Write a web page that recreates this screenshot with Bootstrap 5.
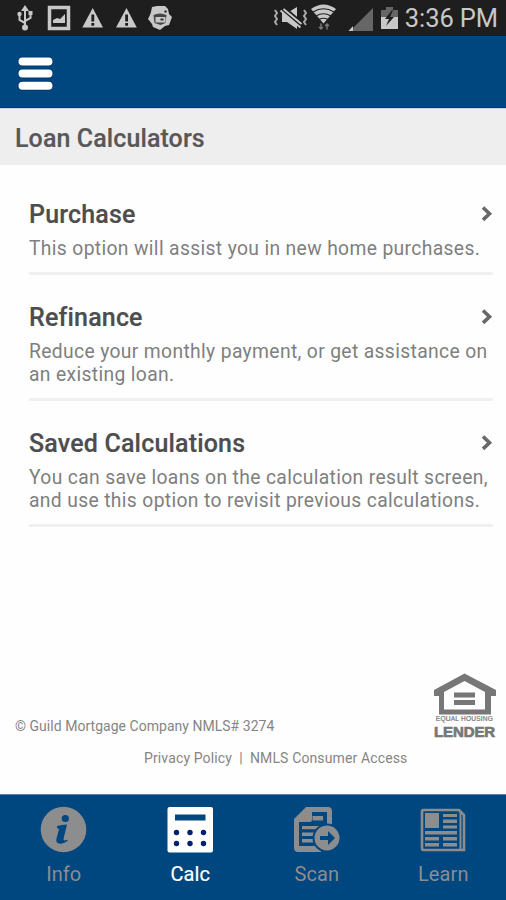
<!DOCTYPE html>
<html lang="en">
<head>
<meta charset="utf-8">
<meta name="viewport" content="width=device-width, initial-scale=1">
<title>Loan Calculators</title>
<link href="https://cdn.jsdelivr.net/npm/bootstrap@5.3.0/dist/css/bootstrap.min.css" rel="stylesheet">
<style>
body{font-family:Roboto,"Liberation Sans",sans-serif;height:900px;overflow:hidden;color:#7d7d7d;background:#fefefe}
svg{display:block;flex:none}
.statusbar{height:36px;background:#1e1e1e;color:#c8c8c8}
.clock{font-size:25.500px;line-height:36px;letter-spacing:-.1px;white-space:nowrap;width:95px;text-align:right}
.topnav{height:72px;background:#00467f;padding:4px 0 0 17px;border-bottom:1px solid #003a77}
.page-title{height:57px;background:#eee;border-top:1px solid #c9d3df;font-size:25px;line-height:59px;font-weight:500;color:#585858;padding-left:15px;letter-spacing:.1px;-webkit-text-stroke:.2px #585858}
.options{margin:6px 13px 0 29px}
.option{padding:28px 0 12px;border-bottom:3px solid #f0f0f0;color:#7f7f7f}
.option:first-child{padding-top:29px}
.option-title{font-size:25px;line-height:30px;font-weight:500;color:#4d4d4d;letter-spacing:.18px;-webkit-text-stroke:.2px #4d4d4d}
.option-text{font-size:19.300px;line-height:23px;margin-top:7px;letter-spacing:.35px;white-space:nowrap}
.legal{font-size:14px;line-height:20px;letter-spacing:.03px;white-space:nowrap;color:#858585}
.copyright{padding:0 9px 0 15px;height:70px}
.lender-logo{width:65px;height:70px}
.lender-small{font:6.600px/8px "Liberation Sans",Arial,sans-serif;letter-spacing:.2px;color:#777;-webkit-text-stroke:.2px #777}
.lender-big{font:bold 15px/14px "Liberation Sans",Arial,sans-serif;letter-spacing:-.1px;margin-top:2px;color:#777;-webkit-text-stroke:.7px #777}
.links{padding-left:144px;margin-top:8px;margin-bottom:26px;letter-spacing:.13px}
.tabs{height:106px;background:#00467f;border-top:1px solid #5f7fa8}
.tab{color:#8d8d8d;font-size:20px;line-height:24px;padding-top:11px;letter-spacing:.1px}
.tab.on{color:#fff}
.tab.on span{-webkit-text-stroke:.2px #fff}
.tab span{margin-top:8px;padding-left:1px}
</style>
<script src="https://cdn.jsdelivr.net/npm/bootstrap@5.3.0/dist/js/bootstrap.bundle.min.js"></script>
</head>
<body class="d-flex flex-column">
<header>
  <div class="statusbar d-flex justify-content-between">
    <svg width="180" height="36" viewBox="0 0 180 36" fill="#c8c8c8">
      <g stroke="#c8c8c8" stroke-width="2" fill="none"><path d="M25 9v19M25 23l-5.500-3v-5M25 21l5.500-3v-5"/></g>
      <path d="M25 5l4 6h-8z"/><circle cx="25" cy="27.500" r="3"/><circle cx="19.500" cy="14" r="2.200"/><path d="M28.500 11h4v4h-4z"/>
      <path d="M49.500 7.500h19v21h-19z" fill="none" stroke="#c8c8c8" stroke-width="3.500"/><path d="M53 23v-3l4-2 3 1 5-5v9z"/>
      <path fill-rule="evenodd" d="M92.700 8l10.300 19.500H82.300zM91.400 14.500v7h2.800v-7zm0 8.500v2.800h2.800V23zM126.500 8l10.300 19.500H116zM125.200 14.500v7h2.800v-7zm0 8.500v2.800h2.800V23z"/>
      <path d="M152 7l5-1 8 0 3 3 1 5 3 3-3 8-4 1-5 4-7-3-1-3-4-5 2-4 1-3z"/><path d="M153.500 15q6-3 13 0l-1 8-5 2-6-2z" fill="#444"/><path d="M155.500 17h10v5.500h-10z"/><path d="M160.500 18.500h3v2h-3z" fill="#333"/><circle cx="165.500" cy="11.500" r="1.200" fill="#333"/>
    </svg>
    <div class="d-flex">
      <svg width="133" height="36" viewBox="270 0 133 36" fill="#c8c8c8">
        <path d="M282 13h5l10-6v22l-10-7h-5z"/><path d="M281 7l21 18" stroke="#1e1e1e" stroke-width="6"/><path d="M280.500 10.500l20 17M283.500 9l18 15" stroke="#c8c8c8" stroke-width="1.900"/>
        <path d="M275 10l2 3-2 3 2 3-2 3 2 3M304 10l2 3-2 3 2 3-2 3 2 3" fill="none" stroke="#aaa" stroke-width="2"/>
        <path d="M311 9q12.500-9 25 0l-12.500 14.500z"/><path d="M313 12q10.500-6.500 21 0M316 16q7.500-4.500 15 0M319 19.500q4.500-2.500 9 0" fill="none" stroke="#1e1e1e" stroke-width="1.100"/>
        <path d="M321 29.500v-6m-2 3.500l2 2 2-2M327 23.500v6m-2-3.500l2-2 2 2" fill="none" stroke="#777" stroke-width="1.500"/>
        <path d="M373 8v23h-23z" fill="#666"/><path d="M353 26v5h-4.500z"/>
        <path d="M381 10h5V7h7v3h5v8h-17z" fill="#666"/><path d="M381 17h17v12h-17z"/><path d="M392 10l-7 9h4l-3 7 8-9h-4l3-7z" fill="#1e1e1e"/>
      </svg>
      <div class="clock">3:36 PM</div>
      <div class="pe-2"></div>
    </div>
  </div>
  <nav class="topnav d-flex align-items-center">
    <svg width="37" height="36" viewBox="0 0 37 36"><path d="M5.500 5.500h26M5.500 17.500h26M5.500 29.700h26" stroke="#00266b" stroke-width="10" stroke-linecap="round" opacity=".45"/><path d="M5.500 5.500h26M5.500 17.500h26M5.500 29.700h26" stroke="#fff" stroke-width="8" stroke-linecap="round"/></svg>
  </nav>
</header>
<h1 class="page-title m-0">Loan Calculators</h1>
<main class="options">
  <div class="option">
    <div class="d-flex justify-content-between"><div class="option-title">Purchase</div><svg width="13" height="30" viewBox="0 0 13 30"><path d="M3 7.500l6.500 6.200-6.500 6.200" fill="none" stroke="#686868" stroke-width="3.600"/></svg></div>
    <div class="option-text">This option will assist you in new home purchases.</div>
  </div>
  <div class="option">
    <div class="d-flex justify-content-between"><div class="option-title">Refinance</div><svg width="13" height="30" viewBox="0 0 13 30"><path d="M3 7.500l6.500 6.200-6.500 6.200" fill="none" stroke="#686868" stroke-width="3.600"/></svg></div>
    <div class="option-text">Reduce your monthly payment, or get assistance on<br>an existing loan.</div>
  </div>
  <div class="option">
    <div class="d-flex justify-content-between"><div class="option-title">Saved Calculations</div><svg width="13" height="30" viewBox="0 0 13 30"><path d="M3 7.500l6.500 6.200-6.500 6.200" fill="none" stroke="#686868" stroke-width="3.600"/></svg></div>
    <div class="option-text">You can save loans on the calculation result screen,<br>and use this option to revisit previous calculations.</div>
  </div>
</main>
<footer class="mt-auto">
  <div class="legal copyright d-flex justify-content-between align-items-end">
    <div class="pb-1">© Guild Mortgage Company NMLS# 3274</div>
    <div class="lender-logo d-flex flex-column align-items-center">
      <svg width="65" height="45" viewBox="432 670 65 45" fill="#777">
        <path fill-rule="evenodd" d="M464.500 673.500l31.500 16.500v6h-5v18.500h-52V696h-5v-6zM464.500 681l-20.500 11v17.500h41V692z"/>
        <path d="M454 692.500h21v5h-21zM454 700h21v5h-21z"/>
      </svg>
      <div class="lender-small">EQUAL HOUSING</div>
      <div class="lender-big">LENDER</div>
    </div>
  </div>
  <div class="legal links">Privacy Policy&nbsp; |&nbsp; NMLS Consumer Access</div>
  <nav class="tabs row g-0 text-center">
    <div class="tab col-3 d-flex flex-column align-items-center"><svg width="48" height="48" viewBox="0 0 48 48"><circle cx="24.500" cy="23.500" r="22.800" fill="#8d8d8d"/><circle cx="26.300" cy="12.500" r="3.600" fill="#00467f"/><path d="M18 20q5-1.500 10-1.500l-3.500 14.500q0 2.500 4 .5v1.500q-5 3.500-8.500 2.500-3.500-.8-2.500-5l2.500-9.500-2-1z" fill="#00467f"/></svg><span>Info</span></div>
    <div class="tab on col-3 d-flex flex-column align-items-center"><svg width="48" height="48" viewBox="0 0 48 48"><rect x="1.500" y="1" width="45.500" height="45.500" rx="2" fill="#fff"/><path d="M9 8.500h30.500v6H9z" fill="#00467f"/><g fill="#00206b"><circle cx="10.500" cy="26.500" r="2.700"/><circle cx="24" cy="26.500" r="2.700"/><circle cx="37.500" cy="26.500" r="2.700"/><circle cx="10.500" cy="37.500" r="2.700"/><circle cx="24" cy="37.500" r="2.700"/><circle cx="37.500" cy="37.500" r="2.700"/></g></svg><span>Calc</span></div>
    <div class="tab col-3 d-flex flex-column align-items-center"><svg width="48" height="48" viewBox="0 0 48 48"><path fill-rule="evenodd" d="M14 1h22q4 0 4 4v19h-5V6H20v8q0 2-2 2H7v24h22v6H6q-4 0-4-4V13z" fill="#8d8d8d"/><path d="M20.500 10h10.500v4.500H20.500zM10 20h19v3.200H10zM10 26.500h14v3.500H10zM10 33h12v3.500H10z" fill="#8d8d8d"/><circle cx="35" cy="32" r="14.500" fill="#00467f"/><circle cx="35" cy="32" r="12.500" fill="#8d8d8d"/><path d="M28 30h8v-5l7 7-7 7v-5h-8z" fill="#00467f"/></svg><span>Scan</span></div>
    <div class="tab col-3 d-flex flex-column align-items-center"><svg width="48" height="48" viewBox="0 0 48 48"><path d="M4.500 4h35.500l5 5v35H4.500q-1.500 0-1.500-2V6q0-2 1.500-2z" fill="none" stroke="#8d8d8d" stroke-width="2.600"/><path d="M41.500 5v38" stroke="#8d8d8d" stroke-width="2"/><path d="M6 7h14v15H6zM24 8h14v3H24zM24 13.500h14v3.500H24zM24 19.500h14v3H24zM6 25h32v3.500H6zM6 31h14v3.500H6zM24 31h14v3.500H24zM6 37h14v3.500H6zM24 37h14v3.500H24z" fill="#8d8d8d"/></svg><span>Learn</span></div>
  </nav>
</footer>
</body>
</html>
